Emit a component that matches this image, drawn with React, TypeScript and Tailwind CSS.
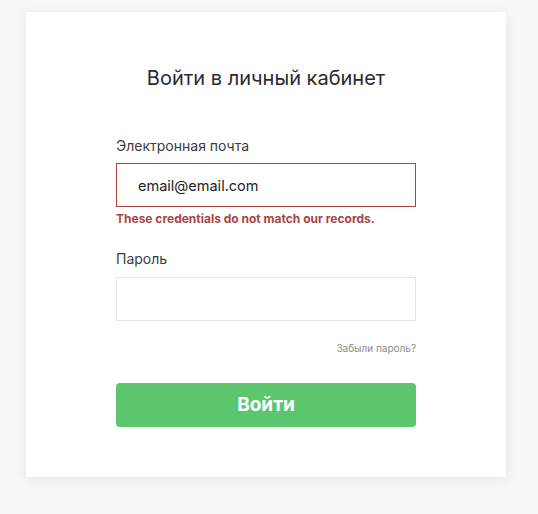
export default function App() {
  return (
    <main className="min-h-[514px] bg-[#f6f7f9] pt-3 font-['Inter',sans-serif]">
      <section className="ml-[26px] w-[480px] bg-white px-[90px] pb-[50px] pt-[54px] shadow-[0_2px_12px_rgba(0,0,0,0.08)]">
        <h1 className="text-center text-[20px] leading-6 text-[#2a2a30]">Войти в личный кабинет</h1>

        <form className="mt-[46px]">
          <label className="block text-[14px] leading-5 text-[#3b3b40]">Электронная почта</label>
          <input
            type="email"
            defaultValue="email@email.com"
            className="mt-[7px] block h-[44px] w-full border border-[#a94442] bg-white px-[21px] text-[14.5px] text-[#222] outline-none"
          />
          <p className="mt-1 text-[12px] font-bold leading-4 text-[#a94442]">These credentials do not match our records.</p>

          <label className="mt-[22px] block text-[14px] leading-5 text-[#3b3b40]">Пароль</label>
          <input
            type="password"
            className="mt-2 block h-[44px] w-full border border-[#e4e4e7] bg-white px-[21px] text-[15px] outline-none"
          />

          <div className="mt-5 text-right text-[10px] leading-[14px] text-[#8a8a90]">
            <a href="#">Забыли пароль?</a>
          </div>

          <button
            type="button"
            className="mt-7 block h-[44px] w-full rounded-[4px] bg-[#5cc66f] text-[19px] font-bold text-white"
          >
            Войти
          </button>
        </form>
      </section>
    </main>
  );
}
